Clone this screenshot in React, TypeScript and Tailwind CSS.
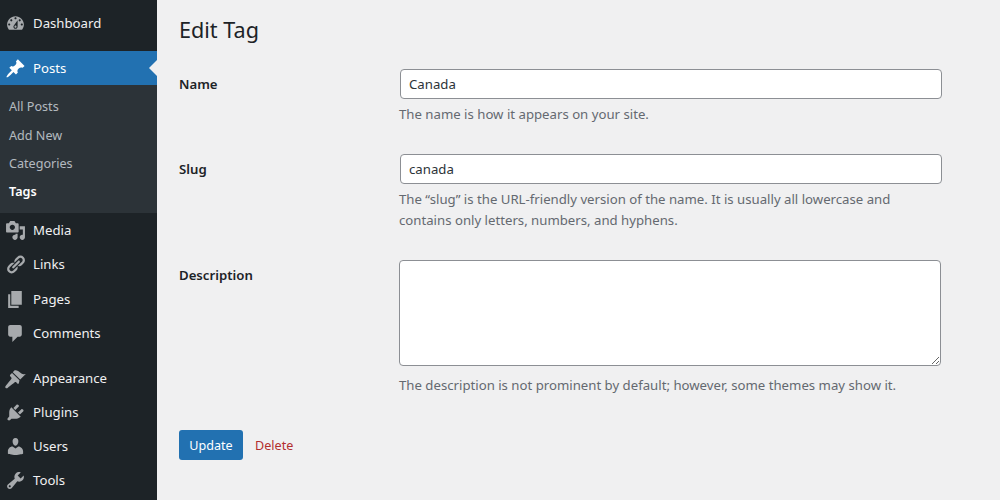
import type { ReactNode } from 'react';

const ICONS: Record<string, string> = {
  dashboard: 'M3.76 16h12.48c1.1-1.37 1.76-3.11 1.76-5 0-4.42-3.58-8-8-8s-8 3.58-8 8c0 1.89.66 3.63 1.76 5zM10 4c.55 0 1 .45 1 1s-.45 1-1 1-1-.45-1-1 .45-1 1-1zM6 6c.55 0 1 .45 1 1s-.45 1-1 1-1-.45-1-1 .45-1 1-1zm8 0c.55 0 1 .45 1 1s-.45 1-1 1-1-.45-1-1 .45-1 1-1zm-5.37 5.55L12 7v6c0 1.1-.9 2-2 2s-2-.9-2-2c0-.57.24-1.08.63-1.45zM4 10c.55 0 1 .45 1 1s-.45 1-1 1-1-.45-1-1 .45-1 1-1zm12 0c.55 0 1 .45 1 1s-.45 1-1 1-1-.45-1-1 .45-1 1-1zm-5 3c0-.55-.45-1-1-1s-1 .45-1 1 .45 1 1 1 1-.45 1-1z',
  posts: 'M10.44 3.02l1.82-1.82 6.36 6.35-1.83 1.82c-1.05-.68-2.48-.57-3.41.36l-.75.75c-.92.93-1.04 2.35-.35 3.41l-1.83 1.82-2.41-2.41-2.8 2.79c-.42.42-3.38 2.71-3.8 2.29s1.86-3.39 2.28-3.81l2.79-2.79L4.1 9.36l1.83-1.82c1.05.69 2.48.57 3.41-.36l.75-.75c.93-.92 1.05-2.35.35-3.41z',
  media: 'M13 11V4c0-.55-.45-1-1-1h-1.67L9 1H5L3.67 3H2c-.55 0-1 .45-1 1v7c0 .55.45 1 1 1h10c.55 0 1-.45 1-1zM7 4.5c1.38 0 2.5 1.12 2.5 2.5S8.38 9.5 7 9.5 4.5 8.38 4.5 7 5.62 4.5 7 4.5zM14 6h5v10.5c0 1.38-1.12 2.5-2.5 2.5S14 17.88 14 16.5s1.12-2.5 2.5-2.5c.17 0 .34.02.5.05V9h-3V6zm-4 8.05V13h2v3.5c0 1.38-1.12 2.5-2.5 2.5S7 17.88 7 16.5 8.12 14 9.5 14c.17 0 .34.02.5.05z',
  links: 'M17.74 2.76c1.68 1.69 1.68 4.41 0 6.1l-1.53 1.52c-1.12 1.12-2.7 1.47-4.14 1.09l2.62-2.61.76-.77.76-.76c.84-.84.84-2.2 0-3.04-.84-.85-2.2-.85-3.04 0l-.77.76-3.38 3.38c-.37-1.44-.02-3.02 1.1-4.14l1.52-1.53c1.69-1.68 4.42-1.68 6.1 0zM8.59 13.43l5.34-5.34c.42-.42.42-1.1 0-1.52-.44-.43-1.13-.39-1.53 0l-5.33 5.34c-.42.42-.42 1.1 0 1.52.44.43 1.13.39 1.52 0zm-.76 2.29l4.14-4.15c.38 1.44.03 3.02-1.09 4.14l-1.52 1.53c-1.69 1.68-4.41 1.68-6.1 0-1.68-1.68-1.68-4.42 0-6.1l1.53-1.52c1.12-1.12 2.7-1.47 4.14-1.1l-4.14 4.15c-.85.84-.85 2.2 0 3.05.84.84 2.2.84 3.04 0z',
  pages: 'M6 15V2h10v13H6zm-1 1h8v2H3V5h2v11z',
  comments: 'M5 2h9c1.1 0 2 .9 2 2v7c0 1.1-.9 2-2 2h-2l-5 5v-5H5c-1.1 0-2-.9-2-2V4c0-1.1.9-2 2-2z',
  appearance: 'M14.48 11.06L7.41 3.99l1.5-1.5c.5-.56 2.3-.47 3.51.32 1.21.8 1.43 1.28 2.91 2.1 1.18.64 2.45 1.26 4.45.85zm-.71.71L6.7 4.7 4.93 6.47c-.39.39-.39 1.02 0 1.41l1.06 1.06c.39.39.39 1.03 0 1.42-.6.6-5.36 6.76-5.36 6.76-.51.51-.51 1.34 0 1.85.51.51 1.34.51 1.85 0 0 0 6.16-4.76 6.76-5.36.39-.39 1.03-.39 1.42 0l1.06 1.06c.39.39 1.02.39 1.41 0z',
  plugins: 'M13.11 4.36L9.87 7.6 8 5.73l3.24-3.24c.35-.34 1.05-.2 1.56.32.52.51.66 1.21.31 1.55zm-8 1.77l.91-1.12 9.01 9.01-1.19.84c-.71.71-2.63 1.16-3.82 1.16H6.14L4.9 17.26c-.59.59-1.54.59-2.12 0-.59-.58-.59-1.53 0-2.12l1.24-1.24v-3.88c0-1.13.4-3.19 1.09-3.89zm7.26 3.97l3.24-3.24c.34-.35 1.04-.21 1.55.31.52.51.66 1.21.31 1.55l-3.24 3.25z',
  users: 'M10 9.25c-2.27 0-2.73-3.44-2.73-3.44C7 4.02 7.82 2 9.97 2c2.16 0 2.98 2.02 2.71 3.81 0 0-.41 3.44-2.68 3.44zm0 2.57L12.72 10c2.39 0 4.52 2.33 4.52 4.53v2.49s-3.65 1.13-7.24 1.13c-3.65 0-7.24-1.13-7.24-1.13v-2.49c0-2.25 1.94-4.48 4.47-4.48z',
  tools: 'M16.68 9.77c-1.34 1.34-3.3 1.67-4.95.99l-5.41 6.52c-.99.99-2.59.99-3.58 0s-.99-2.59 0-3.57l6.52-5.42c-.68-1.65-.35-3.61.99-4.95 1.28-1.28 3.12-1.62 4.72-1.06l-2.89 2.89 2.82 2.82 2.86-2.87c.53 1.58.18 3.39-1.08 4.65zM3.81 16.21c.4.39 1.04.39 1.43 0 .4-.4.4-1.04 0-1.43-.39-.4-1.03-.4-1.43 0-.39.39-.39 1.03 0 1.43z',
};

function MenuItem({ icon, label, className = 'h-[34.5px]' }: { icon: string; label: string; className?: string }) {
  return (
    <div className={`flex items-center text-[#f0f0f1] ${className}`}>
      <svg viewBox="0 0 20 20" className="ml-[5px] mr-[7px] h-[21px] w-[21px] fill-[#a7aaad]">
        <path fillRule="evenodd" d={ICONS[icon]} />
      </svg>
      <span>{label}</span>
    </div>
  );
}

function FormRow({ label, children, className }: { label: string; children: ReactNode; className: string }) {
  return (
    <div className={`flex ${className}`}>
      <label className="w-[220px] shrink-0 pt-[5px] font-semibold text-[#1d2327]">{label}</label>
      <div className="w-[543px]">{children}</div>
    </div>
  );
}

export default function App() {
  return (
    <div className="flex h-[500px] w-[1000px] overflow-hidden bg-[#f0f0f1] font-['Noto_Sans','Open_Sans',sans-serif] text-[13.2px] leading-[21px]">
      {/* Admin menu */}
      <nav className="w-[157px] shrink-0 bg-[#1d2327] pt-[6px]">
        <MenuItem icon="dashboard" label="Dashboard" className="h-[34px]" />
        <div className="relative mt-[11px] flex h-[34px] items-center bg-[#2271b1] text-white">
          <svg viewBox="0 0 20 20" className="ml-[5px] mr-[7px] h-[21px] w-[21px] fill-white">
            <path d={ICONS.posts} />
          </svg>
          <span>Posts</span>
          <div className="absolute right-0 top-[9px] h-0 w-0 border-y-[8px] border-r-[8px] border-y-transparent border-r-[#f0f0f1]" />
        </div>
        <div className="flex h-[128px] flex-col bg-[#2c3338] pl-[9px] pt-[7.5px] text-[12.6px] text-[#f0f6fcb3]">
          <div className="flex h-[28.4px] items-center">All Posts</div>
          <div className="flex h-[28.4px] items-center">Add New</div>
          <div className="flex h-[28.4px] items-center">Categories</div>
          <div className="flex h-[27.4px] items-center font-semibold text-white">Tags</div>
        </div>
        <MenuItem icon="media" label="Media" />
        <MenuItem icon="links" label="Links" />
        <MenuItem icon="pages" label="Pages" />
        <MenuItem icon="comments" label="Comments" />
        <div className="h-[10.5px]" />
        <MenuItem icon="appearance" label="Appearance" className="h-[34px]" />
        <MenuItem icon="plugins" label="Plugins" className="h-[34px]" />
        <MenuItem icon="users" label="Users" className="h-[34px]" />
        <MenuItem icon="tools" label="Tools" className="h-[34px]" />
      </nav>

      {/* Edit form */}
      <main className="flex-1 pl-[22px] pt-[14px] text-[#646970]">
        <h1 className="text-[21.6px] leading-[31px] font-normal text-[#1d2327]">Edit Tag</h1>
        <FormRow label="Name" className="mt-[24px]">
          <input
            readOnly
            value="Canada"
            className="ml-px block h-[30px] w-[542px] rounded-[4px] border border-[#8c8f94] bg-white px-[8px] text-[#2c3338] outline-none"
          />
          <p className="mt-[5px]">The name is how it appears on your site.</p>
        </FormRow>
        <FormRow label="Slug" className="mt-[29px]">
          <input
            readOnly
            value="canada"
            className="ml-px block h-[30px] w-[542px] rounded-[4px] border border-[#8c8f94] bg-white px-[8px] text-[#2c3338] outline-none"
          />
          <p className="mt-[5px]">
            The “slug” is the URL-friendly version of the name. It is usually all lowercase and
            <br />
            contains only letters, numbers, and hyphens.
          </p>
        </FormRow>
        <FormRow label="Description" className="mt-[29px]">
          <textarea
            readOnly
            className="block h-[106px] w-[542px] resize-y rounded-[4px] border border-[#8c8f94] bg-white outline-none"
          />
          <p className="mt-[9px]">The description is not prominent by default; however, some themes may show it.</p>
        </FormRow>
        <div className="mt-[34px] flex items-center text-[12.6px]">
          <button className="h-[30px] w-[64px] rounded-[3px] bg-[#2271b1] text-white">Update</button>
          <a className="ml-[12px] text-[#b32d2e]">Delete</a>
        </div>
      </main>
    </div>
  );
}
